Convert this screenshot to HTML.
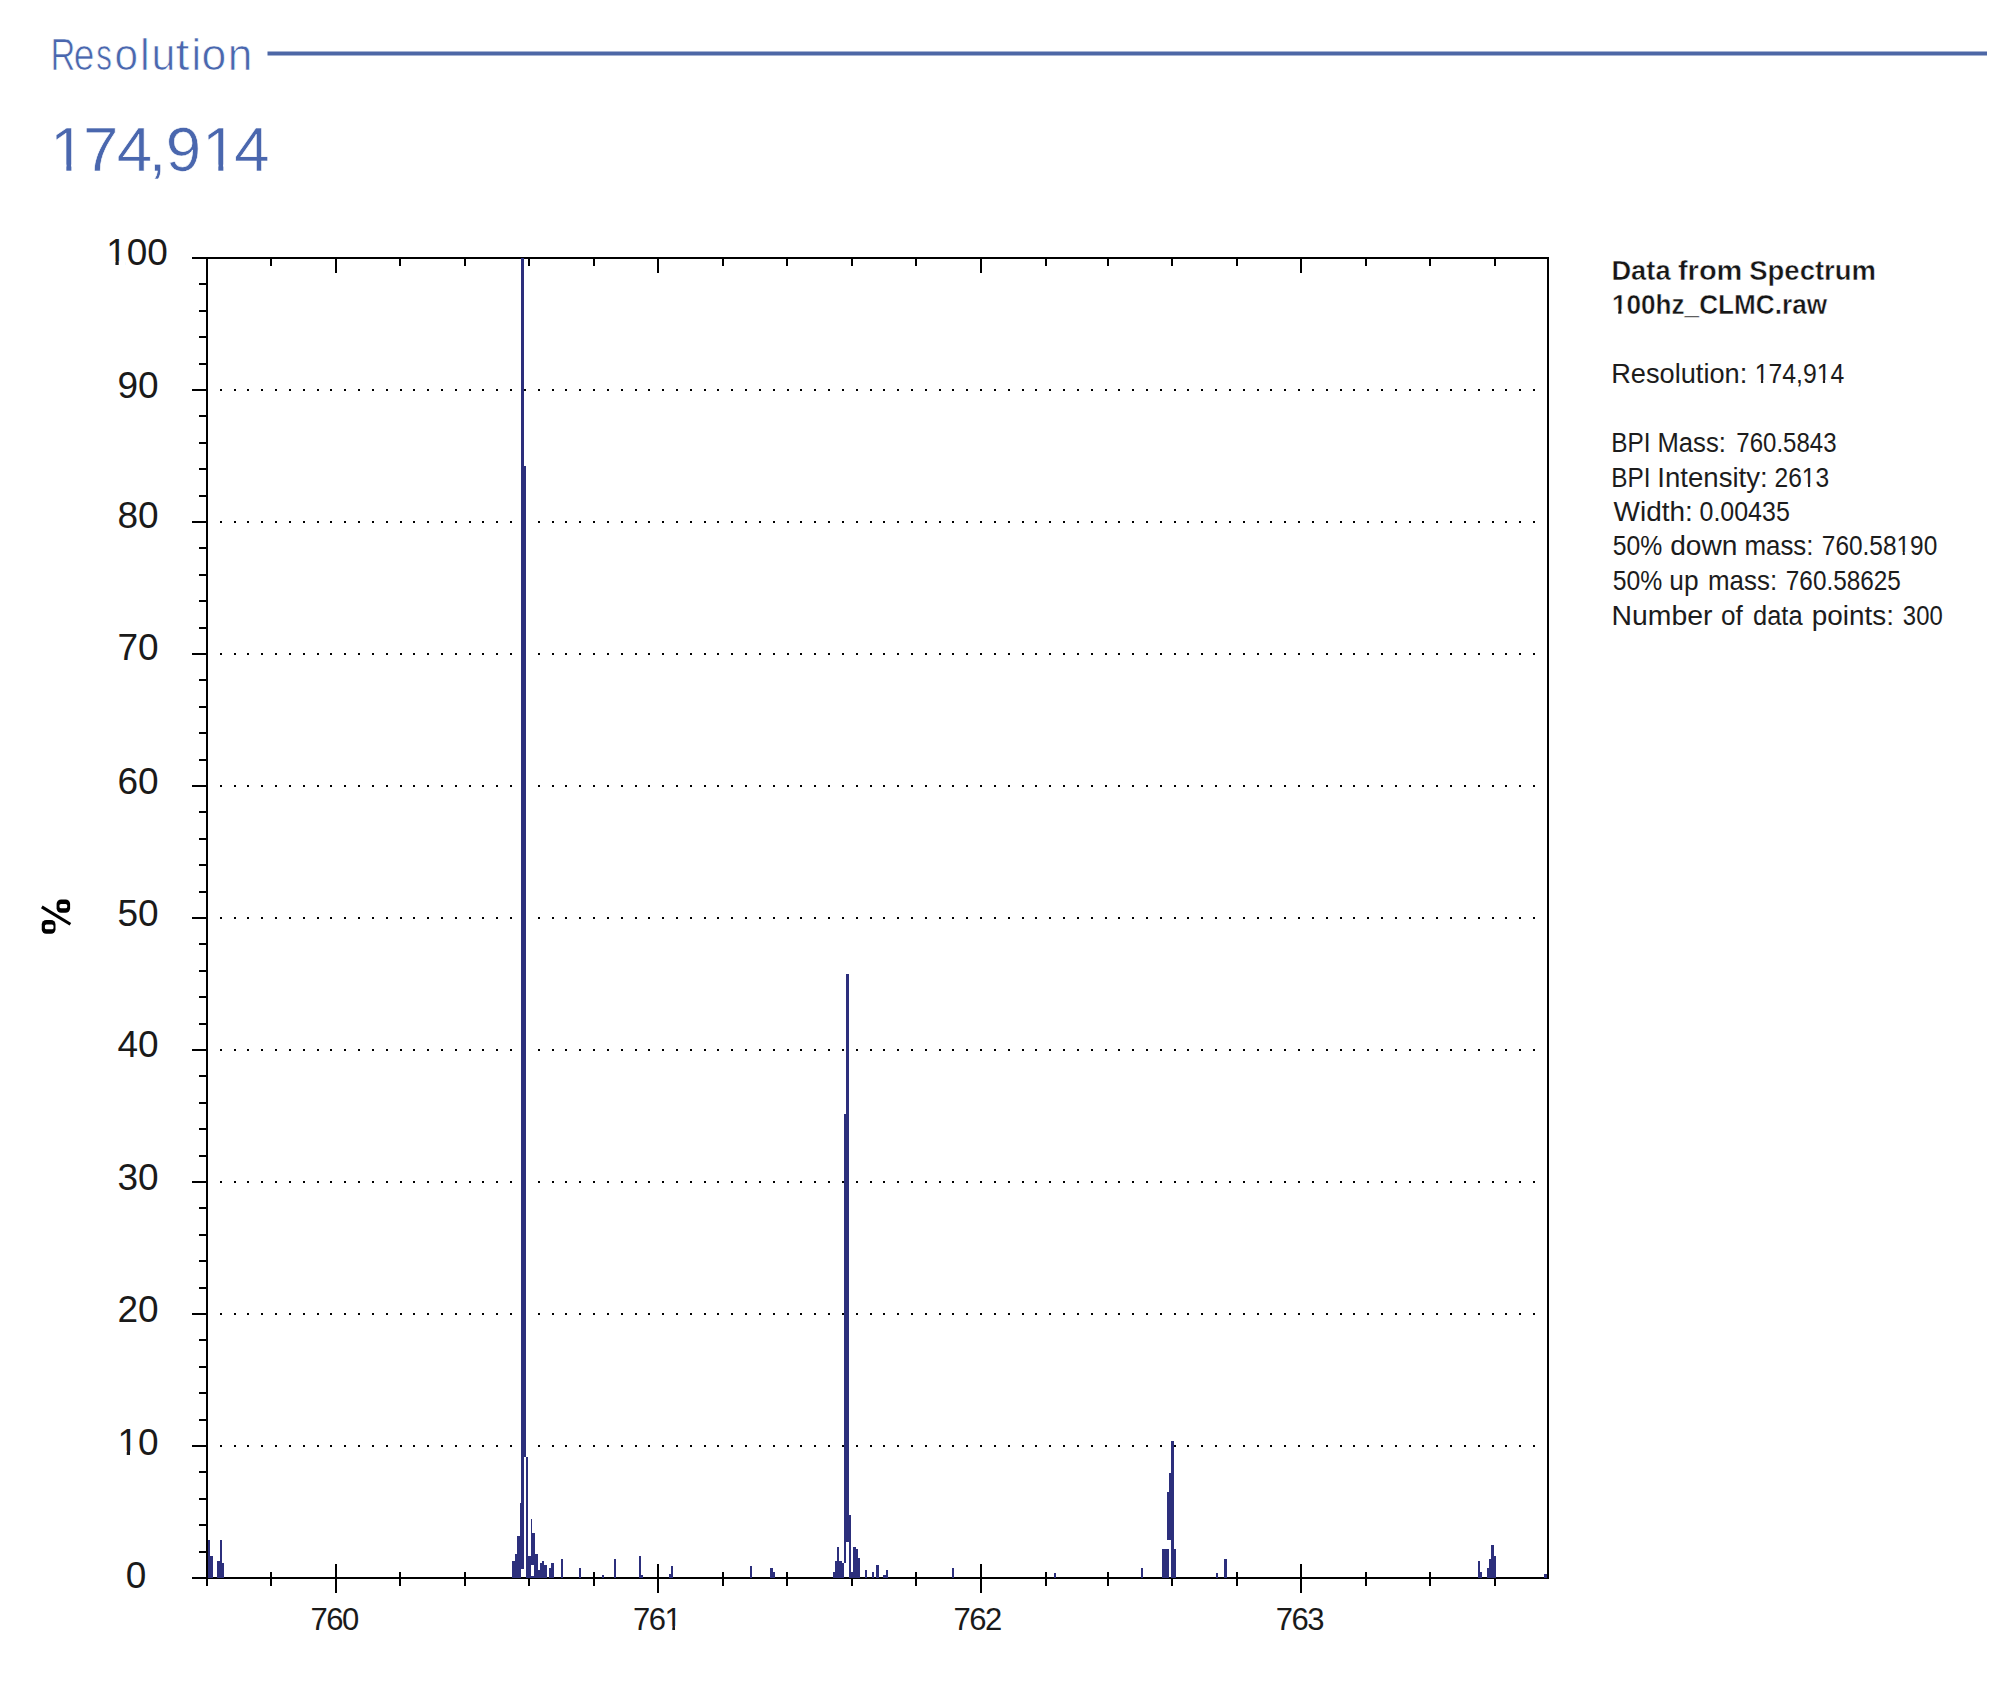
<!DOCTYPE html>
<html><head><meta charset="utf-8"><title>Resolution</title>
<style>
html,body{margin:0;padding:0;background:#fff;}
body{width:2000px;height:1696px;overflow:hidden;position:relative;}
svg{position:absolute;left:0;top:0;}
text{font-family:"Liberation Sans",sans-serif;}
.yl{fill:#1a1a1a;}
.xl{fill:#1a1a1a;}
.pct{font-weight:bold;fill:#000;}
.title{fill:#4a67ae;stroke:#fff;stroke-width:0.7px;}
.big{fill:#4a67ae;stroke:#fff;stroke-width:0.6px;}
.ib{font-weight:bold;fill:#161616;stroke:#fff;stroke-width:0.45px;}
.ir{fill:#1c1c1c;}
</style></head>
<body>
<svg width="2000" height="1696" viewBox="0 0 2000 1696">
<g shape-rendering="crispEdges">
<rect x="192" y="256.8" width="1357" height="2.3" fill="#000"/>
<rect x="192" y="1577" width="1357" height="2" fill="#000"/>
<rect x="206" y="257" width="2" height="1329" fill="#000"/>
<rect x="1547" y="257" width="2" height="1322" fill="#000"/>
<rect x="192" y="1577.00" width="15" height="2" fill="#000"/>
<rect x="199" y="1550.60" width="8" height="2" fill="#000"/>
<rect x="199" y="1524.20" width="8" height="2" fill="#000"/>
<rect x="199" y="1497.79" width="8" height="2" fill="#000"/>
<rect x="199" y="1471.39" width="8" height="2" fill="#000"/>
<rect x="192" y="1444.99" width="15" height="2" fill="#000"/>
<rect x="199" y="1418.59" width="8" height="2" fill="#000"/>
<rect x="199" y="1392.19" width="8" height="2" fill="#000"/>
<rect x="199" y="1365.78" width="8" height="2" fill="#000"/>
<rect x="199" y="1339.38" width="8" height="2" fill="#000"/>
<rect x="192" y="1312.98" width="15" height="2" fill="#000"/>
<rect x="199" y="1286.58" width="8" height="2" fill="#000"/>
<rect x="199" y="1260.18" width="8" height="2" fill="#000"/>
<rect x="199" y="1233.77" width="8" height="2" fill="#000"/>
<rect x="199" y="1207.37" width="8" height="2" fill="#000"/>
<rect x="192" y="1180.97" width="15" height="2" fill="#000"/>
<rect x="199" y="1154.57" width="8" height="2" fill="#000"/>
<rect x="199" y="1128.17" width="8" height="2" fill="#000"/>
<rect x="199" y="1101.76" width="8" height="2" fill="#000"/>
<rect x="199" y="1075.36" width="8" height="2" fill="#000"/>
<rect x="192" y="1048.96" width="15" height="2" fill="#000"/>
<rect x="199" y="1022.56" width="8" height="2" fill="#000"/>
<rect x="199" y="996.16" width="8" height="2" fill="#000"/>
<rect x="199" y="969.75" width="8" height="2" fill="#000"/>
<rect x="199" y="943.35" width="8" height="2" fill="#000"/>
<rect x="192" y="916.95" width="15" height="2" fill="#000"/>
<rect x="199" y="890.55" width="8" height="2" fill="#000"/>
<rect x="199" y="864.15" width="8" height="2" fill="#000"/>
<rect x="199" y="837.74" width="8" height="2" fill="#000"/>
<rect x="199" y="811.34" width="8" height="2" fill="#000"/>
<rect x="192" y="784.94" width="15" height="2" fill="#000"/>
<rect x="199" y="758.54" width="8" height="2" fill="#000"/>
<rect x="199" y="732.14" width="8" height="2" fill="#000"/>
<rect x="199" y="705.73" width="8" height="2" fill="#000"/>
<rect x="199" y="679.33" width="8" height="2" fill="#000"/>
<rect x="192" y="652.93" width="15" height="2" fill="#000"/>
<rect x="199" y="626.53" width="8" height="2" fill="#000"/>
<rect x="199" y="600.13" width="8" height="2" fill="#000"/>
<rect x="199" y="573.72" width="8" height="2" fill="#000"/>
<rect x="199" y="547.32" width="8" height="2" fill="#000"/>
<rect x="192" y="520.92" width="15" height="2" fill="#000"/>
<rect x="199" y="494.52" width="8" height="2" fill="#000"/>
<rect x="199" y="468.12" width="8" height="2" fill="#000"/>
<rect x="199" y="441.71" width="8" height="2" fill="#000"/>
<rect x="199" y="415.31" width="8" height="2" fill="#000"/>
<rect x="192" y="388.91" width="15" height="2" fill="#000"/>
<rect x="199" y="362.51" width="8" height="2" fill="#000"/>
<rect x="199" y="336.11" width="8" height="2" fill="#000"/>
<rect x="199" y="309.70" width="8" height="2" fill="#000"/>
<rect x="199" y="283.30" width="8" height="2" fill="#000"/>
<rect x="192" y="256.90" width="15" height="2" fill="#000"/>
<line x1="219.8" y1="1445.99" x2="1537" y2="1445.99" stroke="#000" stroke-width="2" stroke-dasharray="2 11.824"/>
<line x1="219.8" y1="1313.98" x2="1537" y2="1313.98" stroke="#000" stroke-width="2" stroke-dasharray="2 11.824"/>
<line x1="219.8" y1="1181.97" x2="1537" y2="1181.97" stroke="#000" stroke-width="2" stroke-dasharray="2 11.824"/>
<line x1="219.8" y1="1049.96" x2="1537" y2="1049.96" stroke="#000" stroke-width="2" stroke-dasharray="2 11.824"/>
<line x1="219.8" y1="917.95" x2="1537" y2="917.95" stroke="#000" stroke-width="2" stroke-dasharray="2 11.824"/>
<line x1="219.8" y1="785.94" x2="1537" y2="785.94" stroke="#000" stroke-width="2" stroke-dasharray="2 11.824"/>
<line x1="219.8" y1="653.93" x2="1537" y2="653.93" stroke="#000" stroke-width="2" stroke-dasharray="2 11.824"/>
<line x1="219.8" y1="521.92" x2="1537" y2="521.92" stroke="#000" stroke-width="2" stroke-dasharray="2 11.824"/>
<line x1="219.8" y1="389.91" x2="1537" y2="389.91" stroke="#000" stroke-width="2" stroke-dasharray="2 11.824"/>
<rect x="270.40" y="1572" width="2" height="14" fill="#000"/>
<rect x="270.40" y="258" width="2" height="7.5" fill="#000"/>
<rect x="335.00" y="1564" width="2" height="29" fill="#000"/>
<rect x="335.00" y="258" width="2" height="14.5" fill="#000"/>
<rect x="399.40" y="1572" width="2" height="14" fill="#000"/>
<rect x="399.40" y="258" width="2" height="7.5" fill="#000"/>
<rect x="464.00" y="1572" width="2" height="14" fill="#000"/>
<rect x="464.00" y="258" width="2" height="7.5" fill="#000"/>
<rect x="528.40" y="1572" width="2" height="14" fill="#000"/>
<rect x="528.40" y="258" width="2" height="7.5" fill="#000"/>
<rect x="593.00" y="1572" width="2" height="14" fill="#000"/>
<rect x="593.00" y="258" width="2" height="7.5" fill="#000"/>
<rect x="657.40" y="1564" width="2" height="29" fill="#000"/>
<rect x="657.40" y="258" width="2" height="14.5" fill="#000"/>
<rect x="722.00" y="1572" width="2" height="14" fill="#000"/>
<rect x="722.00" y="258" width="2" height="7.5" fill="#000"/>
<rect x="786.40" y="1572" width="2" height="14" fill="#000"/>
<rect x="786.40" y="258" width="2" height="7.5" fill="#000"/>
<rect x="851.00" y="1572" width="2" height="14" fill="#000"/>
<rect x="851.00" y="258" width="2" height="7.5" fill="#000"/>
<rect x="915.40" y="1572" width="2" height="14" fill="#000"/>
<rect x="915.40" y="258" width="2" height="7.5" fill="#000"/>
<rect x="980.00" y="1564" width="2" height="29" fill="#000"/>
<rect x="980.00" y="258" width="2" height="14.5" fill="#000"/>
<rect x="1044.60" y="1572" width="2" height="14" fill="#000"/>
<rect x="1044.60" y="258" width="2" height="7.5" fill="#000"/>
<rect x="1107.00" y="1572" width="2" height="14" fill="#000"/>
<rect x="1107.00" y="258" width="2" height="7.5" fill="#000"/>
<rect x="1171.40" y="1572" width="2" height="14" fill="#000"/>
<rect x="1171.40" y="258" width="2" height="7.5" fill="#000"/>
<rect x="1236.00" y="1572" width="2" height="14" fill="#000"/>
<rect x="1236.00" y="258" width="2" height="7.5" fill="#000"/>
<rect x="1300.00" y="1564" width="2" height="29" fill="#000"/>
<rect x="1300.00" y="258" width="2" height="14.5" fill="#000"/>
<rect x="1364.60" y="1572" width="2" height="14" fill="#000"/>
<rect x="1364.60" y="258" width="2" height="7.5" fill="#000"/>
<rect x="1429.40" y="1572" width="2" height="14" fill="#000"/>
<rect x="1429.40" y="258" width="2" height="7.5" fill="#000"/>
<rect x="1494.00" y="1572" width="2" height="14" fill="#000"/>
<rect x="1494.00" y="258" width="2" height="7.5" fill="#000"/>
<rect x="207.9" y="1540.1" width="2.40" height="37.90" fill="#2c2f7c"/>
<rect x="210.3" y="1556.2" width="2.30" height="21.80" fill="#2c2f7c"/>
<rect x="217.2" y="1561" width="2.70" height="17.00" fill="#2c2f7c"/>
<rect x="219.9" y="1540.1" width="2.10" height="37.90" fill="#2c2f7c"/>
<rect x="222.0" y="1563.1" width="2.00" height="14.90" fill="#2c2f7c"/>
<rect x="512.3" y="1561" width="2.50" height="17.00" fill="#2c2f7c"/>
<rect x="514.8" y="1554.3" width="2.40" height="23.70" fill="#2c2f7c"/>
<rect x="517.2" y="1535.8" width="2.50" height="42.20" fill="#2c2f7c"/>
<rect x="519.7" y="1503" width="1.60" height="75.00" fill="#2c2f7c"/>
<rect x="521.1" y="257.5" width="2.70" height="1311.90" fill="#2c2f7c"/>
<rect x="521.1" y="466.2" width="5.10" height="990.80" fill="#2c2f7c"/>
<rect x="526.2" y="1457" width="2.10" height="121.00" fill="#2c2f7c"/>
<rect x="528.3" y="1555.9" width="2.50" height="22.10" fill="#2c2f7c"/>
<rect x="530.8" y="1519.3" width="1.60" height="58.70" fill="#2c2f7c"/>
<rect x="532.4" y="1533.1" width="2.40" height="44.90" fill="#2c2f7c"/>
<rect x="534.8" y="1554.3" width="2.80" height="23.70" fill="#2c2f7c"/>
<rect x="537.6" y="1570" width="2.40" height="8.00" fill="#2c2f7c"/>
<rect x="540" y="1563.2" width="2.20" height="14.80" fill="#2c2f7c"/>
<rect x="542.2" y="1561.2" width="2.20" height="16.80" fill="#2c2f7c"/>
<rect x="544.4" y="1565.4" width="2.40" height="12.60" fill="#2c2f7c"/>
<rect x="549.2" y="1568" width="2.20" height="10.00" fill="#2c2f7c"/>
<rect x="551.4" y="1563.2" width="2.20" height="14.80" fill="#2c2f7c"/>
<rect x="560.8" y="1558.6" width="2.00" height="19.40" fill="#2c2f7c"/>
<rect x="579" y="1568" width="2.00" height="10.00" fill="#2c2f7c"/>
<rect x="602.2" y="1574.8" width="2.00" height="3.20" fill="#2c2f7c"/>
<rect x="613.6" y="1558.6" width="2.20" height="19.40" fill="#2c2f7c"/>
<rect x="639" y="1556.4" width="2.20" height="21.60" fill="#2c2f7c"/>
<rect x="641.2" y="1575.2" width="2.20" height="2.80" fill="#2c2f7c"/>
<rect x="669" y="1574.4" width="2.20" height="3.60" fill="#2c2f7c"/>
<rect x="671.2" y="1565.6" width="2.20" height="12.40" fill="#2c2f7c"/>
<rect x="749.6" y="1565.6" width="2.40" height="12.40" fill="#2c2f7c"/>
<rect x="770" y="1568" width="2.80" height="10.00" fill="#2c2f7c"/>
<rect x="772.8" y="1572.4" width="2.00" height="5.60" fill="#2c2f7c"/>
<rect x="832.8" y="1572.3" width="2.10" height="5.70" fill="#2c2f7c"/>
<rect x="834.9" y="1561.2" width="2.10" height="16.80" fill="#2c2f7c"/>
<rect x="837" y="1547" width="2.40" height="31.00" fill="#2c2f7c"/>
<rect x="839.4" y="1561.2" width="2.10" height="16.80" fill="#2c2f7c"/>
<rect x="841.5" y="1563" width="2.40" height="15.00" fill="#2c2f7c"/>
<rect x="846.3" y="973.5" width="2.40" height="140.20" fill="#2c2f7c"/>
<rect x="844.2" y="1113.7" width="4.50" height="428.30" fill="#2c2f7c"/>
<rect x="844.2" y="1542" width="2.10" height="20.70" fill="#2c2f7c"/>
<rect x="848.5" y="1515.2" width="2.40" height="62.80" fill="#2c2f7c"/>
<rect x="850.9" y="1572" width="2.40" height="6.00" fill="#2c2f7c"/>
<rect x="853.3" y="1547" width="2.40" height="31.00" fill="#2c2f7c"/>
<rect x="855.7" y="1549.2" width="2.10" height="28.80" fill="#2c2f7c"/>
<rect x="857.8" y="1558.2" width="2.10" height="19.80" fill="#2c2f7c"/>
<rect x="865" y="1570.2" width="1.80" height="7.80" fill="#2c2f7c"/>
<rect x="871.9" y="1572.3" width="1.80" height="5.70" fill="#2c2f7c"/>
<rect x="876.4" y="1565.4" width="2.10" height="12.60" fill="#2c2f7c"/>
<rect x="883.3" y="1575" width="2.40" height="3.00" fill="#2c2f7c"/>
<rect x="885.7" y="1570.2" width="2.10" height="7.80" fill="#2c2f7c"/>
<rect x="952.1" y="1568" width="2.10" height="10.00" fill="#2c2f7c"/>
<rect x="1053.7" y="1572.5" width="2.10" height="5.50" fill="#2c2f7c"/>
<rect x="1141.2" y="1568" width="2.10" height="10.00" fill="#2c2f7c"/>
<rect x="1162.2" y="1549.1" width="6.70" height="28.90" fill="#2c2f7c"/>
<rect x="1167.1" y="1491.8" width="6.70" height="47.90" fill="#2c2f7c"/>
<rect x="1169.3" y="1473.4" width="4.50" height="18.40" fill="#2c2f7c"/>
<rect x="1171.1" y="1441.2" width="2.70" height="136.80" fill="#2c2f7c"/>
<rect x="1171.6" y="1549.1" width="4.40" height="28.90" fill="#2c2f7c"/>
<rect x="1216" y="1572.5" width="2.00" height="5.50" fill="#2c2f7c"/>
<rect x="1224.4" y="1559" width="2.10" height="19.00" fill="#2c2f7c"/>
<rect x="1477.5" y="1561.2" width="2.30" height="16.80" fill="#2c2f7c"/>
<rect x="1479.8" y="1572.1" width="2.00" height="5.90" fill="#2c2f7c"/>
<rect x="1487.3" y="1568.1" width="2.10" height="9.90" fill="#2c2f7c"/>
<rect x="1489.4" y="1558.8" width="1.90" height="19.20" fill="#2c2f7c"/>
<rect x="1491.3" y="1545" width="2.50" height="33.00" fill="#2c2f7c"/>
<rect x="1493.8" y="1556.1" width="2.00" height="21.90" fill="#2c2f7c"/>
<rect x="1544" y="1574.4" width="2.50" height="3.60" fill="#2c2f7c"/>
<rect x="530.8" y="1564.8" width="2.70" height="11.40" fill="#fff"/>
<rect x="521.3" y="1569.4" width="2.40" height="7.40" fill="#fff"/>
</g>
<text x="136" y="1588.0" text-anchor="middle" class="yl" style="font-size:37px;letter-spacing:0px">0</text>
<text x="138" y="1454.7" text-anchor="middle" class="yl" style="font-size:37px;letter-spacing:0px">10</text>
<text x="138" y="1322.0" text-anchor="middle" class="yl" style="font-size:37px;letter-spacing:0px">20</text>
<text x="138" y="1190.0" text-anchor="middle" class="yl" style="font-size:37px;letter-spacing:0px">30</text>
<text x="138" y="1057.0" text-anchor="middle" class="yl" style="font-size:37px;letter-spacing:0px">40</text>
<text x="138" y="925.6" text-anchor="middle" class="yl" style="font-size:37px;letter-spacing:0px">50</text>
<text x="138" y="793.6" text-anchor="middle" class="yl" style="font-size:37px;letter-spacing:0px">60</text>
<text x="138" y="660.4" text-anchor="middle" class="yl" style="font-size:37px;letter-spacing:0px">70</text>
<text x="138" y="528.4" text-anchor="middle" class="yl" style="font-size:37px;letter-spacing:0px">80</text>
<text x="138" y="398.4" text-anchor="middle" class="yl" style="font-size:37px;letter-spacing:0px">90</text>
<text x="137" y="265.4" text-anchor="middle" class="yl" style="font-size:37px;letter-spacing:0px">100</text>
<text x="334.2" y="1629.6" text-anchor="middle" class="xl" style="font-size:31px;letter-spacing:-1.5px">760</text>
<text x="656.65" y="1629.6" text-anchor="middle" class="xl" style="font-size:31px;letter-spacing:-1.5px">761</text>
<text x="977.1" y="1629.6" text-anchor="middle" class="xl" style="font-size:31px;letter-spacing:-1.5px">762</text>
<text x="1299.45" y="1629.6" text-anchor="middle" class="xl" style="font-size:31px;letter-spacing:-1.5px">763</text>
<g fill="#000"><rect x="56.6" y="899.4" width="13.5" height="13.3" rx="4.5"/><rect x="41.75" y="919.9" width="13.75" height="13.8" rx="4.5"/></g>
<g fill="#fff"><rect x="59.5" y="903.9" width="7.7" height="4.4" rx="1.5"/><rect x="44.9" y="924.6" width="8.6" height="4.6" rx="1.5"/></g>
<line x1="41.8" y1="906.9" x2="70.4" y2="924.3" stroke="#000" stroke-width="3.1"/>
<text x="0" y="0" text-anchor="middle" class="title" style="font-size:43.5px" transform="translate(63.04,69.9) scale(0.792,1)">R</text>
<text x="0" y="0" text-anchor="middle" class="title" style="font-size:43.5px" transform="translate(84.14,69.9) scale(0.852,1)">e</text>
<text x="0" y="0" text-anchor="middle" class="title" style="font-size:43.5px" transform="translate(104.18,69.9) scale(0.720,1)">s</text>
<text x="0" y="0" text-anchor="middle" class="title" style="font-size:43.5px" transform="translate(126.35,69.9) scale(0.973,1)">o</text>
<text x="0" y="0" text-anchor="middle" class="title" style="font-size:43.5px" transform="translate(144.74,69.9) scale(1.000,1)">l</text>
<text x="0" y="0" text-anchor="middle" class="title" style="font-size:43.5px" transform="translate(163.46,69.9) scale(0.987,1)">u</text>
<text x="0" y="0" text-anchor="middle" class="title" style="font-size:43.5px" transform="translate(182.50,69.9) scale(1.150,1)">t</text>
<text x="0" y="0" text-anchor="middle" class="title" style="font-size:43.5px" transform="translate(196.21,69.9) scale(1.000,1)">i</text>
<text x="0" y="0" text-anchor="middle" class="title" style="font-size:43.5px" transform="translate(213.75,69.9) scale(1.023,1)">o</text>
<text x="0" y="0" text-anchor="middle" class="title" style="font-size:43.5px" transform="translate(240.12,69.9) scale(1.018,1)">n</text>
<rect x="267.5" y="51.5" width="1719.5" height="4" fill="#4d67a6"/>
<text x="50.06 83.03 116.87 148.81 165.63 202.03 234.37" y="171.25" text-anchor="start" class="big" style="font-size:63.6px;letter-spacing:0px">174,914</text>
<text x="0" y="0" class="ib" style="font-size:27.5px" transform="matrix(0.9931 0 0 1 1611.41 279.5)">Data</text>
<text x="0" y="0" class="ib" style="font-size:27.5px" transform="matrix(1.0552 0 0 1 1677.94 279.5)">from</text>
<text x="0" y="0" class="ib" style="font-size:27.5px" transform="matrix(1.0 0 0 1 1749.2 279.5)">Spectrum</text>
<text x="0" y="0" class="ib" style="font-size:27.5px" transform="matrix(0.9518 0 0 1 1611.9 313.5)">100hz_CLMC.raw</text>
<text x="0" y="0" class="ir" style="font-size:27.8px" transform="matrix(0.9793 0 0 1 1611.14 383)">Resolution:</text>
<text x="0" y="0" class="ir" style="font-size:27.8px" transform="matrix(0.8908 0 0 1 1754.72 383)">174,914</text>
<text x="0" y="0" class="ir" style="font-size:27.8px" transform="matrix(0.8775 0 0 1 1611.34 452.25)">BPI</text>
<text x="0" y="0" class="ir" style="font-size:27.8px" transform="matrix(0.9229 0 0 1 1657.45 452.25)">Mass:</text>
<text x="0" y="0" class="ir" style="font-size:27.8px" transform="matrix(0.864 0 0 1 1736.34 452.25)">760.5843</text>
<text x="0" y="0" class="ir" style="font-size:27.8px" transform="matrix(0.8775 0 0 1 1611.34 486.75)">BPI</text>
<text x="0" y="0" class="ir" style="font-size:27.8px" transform="matrix(0.9925 0 0 1 1657.31 486.75)">Intensity:</text>
<text x="0" y="0" class="ir" style="font-size:27.8px" transform="matrix(0.8833 0 0 1 1774.52 486.75)">2613</text>
<text x="0" y="0" class="ir" style="font-size:27.8px" transform="matrix(1.0053 0 0 1 1613.6 520.5)">Width:</text>
<text x="0" y="0" class="ir" style="font-size:27.8px" transform="matrix(0.899 0 0 1 1699.5 520.5)">0.00435</text>
<text x="0" y="0" class="ir" style="font-size:27.8px" transform="matrix(0.8907 0 0 1 1612.71 555)">50%</text>
<text x="0" y="0" class="ir" style="font-size:27.8px" transform="matrix(1.0125 0 0 1 1670.19 555)">down</text>
<text x="0" y="0" class="ir" style="font-size:27.8px" transform="matrix(0.9314 0 0 1 1744.44 555)">mass:</text>
<text x="0" y="0" class="ir" style="font-size:27.8px" transform="matrix(0.8792 0 0 1 1821.82 555)">760.58190</text>
<text x="0" y="0" class="ir" style="font-size:27.8px" transform="matrix(0.8907 0 0 1 1612.71 590)">50%</text>
<text x="0" y="0" class="ir" style="font-size:27.8px" transform="matrix(0.9464 0 0 1 1669.31 590)">up</text>
<text x="0" y="0" class="ir" style="font-size:27.8px" transform="matrix(0.9314 0 0 1 1708.04 590)">mass:</text>
<text x="0" y="0" class="ir" style="font-size:27.8px" transform="matrix(0.876 0 0 1 1785.82 590)">760.58625</text>
<text x="0" y="0" class="ir" style="font-size:27.8px" transform="matrix(1.0206 0 0 1 1611.56 624.5)">Number</text>
<text x="0" y="0" class="ir" style="font-size:27.8px" transform="matrix(0.9409 0 0 1 1721.06 624.5)">of</text>
<text x="0" y="0" class="ir" style="font-size:27.8px" transform="matrix(0.9151 0 0 1 1753.08 624.5)">data</text>
<text x="0" y="0" class="ir" style="font-size:27.8px" transform="matrix(1.0038 0 0 1 1811.69 624.5)">points:</text>
<text x="0" y="0" class="ir" style="font-size:27.8px" transform="matrix(0.86 0 0 1 1902.84 624.5)">300</text>
<rect x="119.05" y="1450.62" width="7.68" height="4.68" fill="#fff"/><rect x="130.00" y="1450.62" width="7.12" height="4.68" fill="#fff"/>
<rect x="107.76" y="261.32" width="7.68" height="4.68" fill="#fff"/><rect x="118.71" y="261.32" width="7.12" height="4.68" fill="#fff"/>
<rect x="665.86" y="1626.10" width="6.43" height="4.10" fill="#fff"/><rect x="675.04" y="1626.10" width="5.96" height="4.10" fill="#fff"/>
<rect x="52.85" y="164.60" width="13.50" height="7.25" fill="#fff"/><rect x="71.37" y="164.60" width="12.54" height="7.25" fill="#fff"/>
<rect x="204.82" y="164.60" width="13.50" height="7.25" fill="#fff"/><rect x="223.34" y="164.60" width="12.54" height="7.25" fill="#fff"/>
<g transform="matrix(0.9518000483512878 0 0 1 1611.9000244140625 313.5)"><rect x="0.94" y="-3.91" width="5.70" height="4.51" fill="#fff"/><rect x="9.97" y="-3.91" width="5.07" height="4.51" fill="#fff"/></g>
<g transform="matrix(0.8907999992370605 0 0 1 1754.719970703125 383)"><rect x="1.22" y="-3.19" width="5.77" height="3.79" fill="#fff"/><rect x="9.45" y="-3.19" width="5.35" height="3.79" fill="#fff"/></g>
<g transform="matrix(0.8907999992370605 0 0 1 1754.719970703125 383)"><rect x="70.75" y="-3.19" width="5.77" height="3.79" fill="#fff"/><rect x="78.98" y="-3.19" width="5.35" height="3.79" fill="#fff"/></g>
<g transform="matrix(0.8833000063896179 0 0 1 1774.52001953125 486.75)"><rect x="32.13" y="-3.19" width="5.77" height="3.79" fill="#fff"/><rect x="40.35" y="-3.19" width="5.35" height="3.79" fill="#fff"/></g>
<g transform="matrix(0.8791999816894531 0 0 1 1821.8199462890625 555)"><rect x="86.19" y="-3.19" width="5.77" height="3.79" fill="#fff"/><rect x="94.41" y="-3.19" width="5.35" height="3.79" fill="#fff"/></g>
</svg>
</body></html>
